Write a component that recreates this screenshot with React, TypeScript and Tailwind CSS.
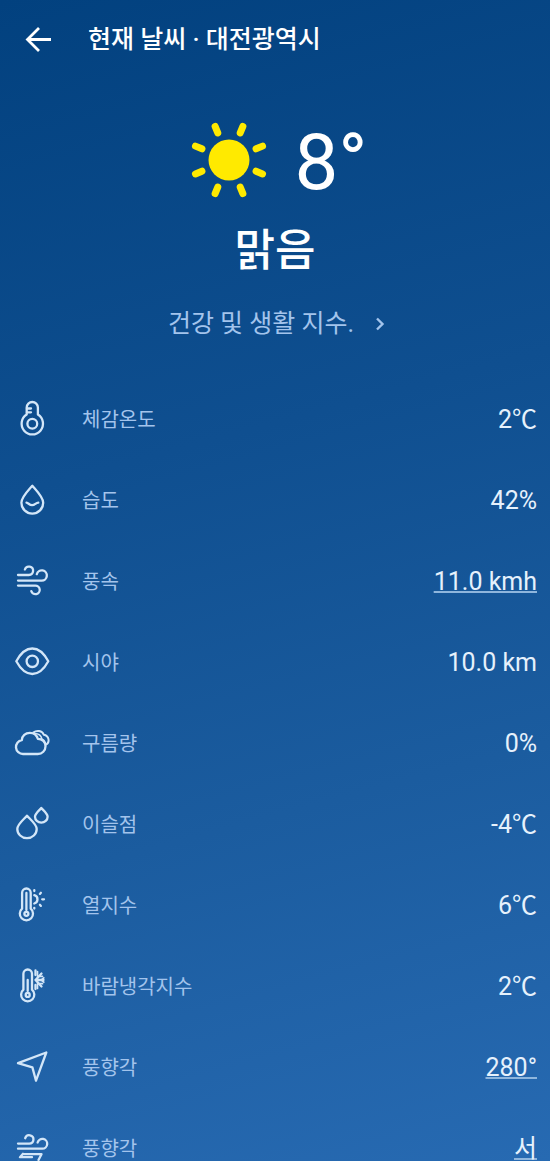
import type { ReactNode } from 'react';

type Metric = {
  id: string;
  label: string;
  value: string;
  icon: ReactNode;
  linked?: boolean;
};

function Icon({ children }: { children: ReactNode }) {
  return (
    <svg
      viewBox="0 0 35 35"
      className="size-[35px] shrink-0 overflow-visible text-[#d3e6f8]"
      fill="none"
      stroke="currentColor"
      strokeWidth="2.3"
      strokeLinecap="round"
      strokeLinejoin="round"
      aria-hidden="true"
    >
      {children}
    </svg>
  );
}

const metrics: Metric[] = [
  {
    id: 'feels-like',
    label: '체감온도',
    value: '2℃',
    icon: (
      <Icon>
        <path d="M11.7 13.6V6.6a5.6 5.6 0 0 1 11.2 0v7A10.7 10.7 0 1 1 11.7 13.6Z" />
        <circle cx="17.3" cy="22.7" r="4.9" />
        <path d="M12 7.5h4M12 11.3h4" />
      </Icon>
    ),
  },
  {
    id: 'humidity',
    label: '습도',
    value: '42%',
    icon: (
      <Icon>
        <path d="M17.3 3.8C14 7.8 6.4 15 6.4 20.7a10.9 10.9 0 0 0 21.8 0C28.2 15 20.6 7.8 17.3 3.8Z" />
        <path d="M11.5 20.6c2 .4 2.8 2.6 5.6 2.6s3.6-2.4 6.2-2.6" />
      </Icon>
    ),
  },
  {
    id: 'wind-speed',
    label: '풍속',
    value: '11.0 kmh',
    linked: true,
    icon: (
      <Icon>
        <path d="M3 12h10.9a4.2 4.2 0 1 0-4-5.5" />
        <path d="M3 17.6h23.6a5.1 5.1 0 1 0-4.8-6.4" />
        <path d="M3 22.6h17.2a4.3 4.3 0 1 1-3.9 5.5" />
      </Icon>
    ),
  },
  {
    id: 'visibility',
    label: '시야',
    value: '10.0 km',
    icon: (
      <Icon>
        <path d="M1.3 17.3C5.5 9.5 11 4.5 17.3 4.5s11.8 5 16 12.8c-4.2 7.7-9.7 12.7-16 12.7S5.5 25 1.3 17.3Z" />
        <circle cx="17.3" cy="17.3" r="5.7" />
      </Icon>
    ),
  },
  {
    id: 'cloud-cover',
    label: '구름량',
    value: '0%',
    icon: (
      <Icon>
        <path d="M8 29a7 7 0 0 1-1.2-13.9C7 10.7 10.5 7.8 14.8 7.8c4 0 7 2.4 8 6 4.5 0 7.7 3.2 7.7 7.5S27.2 29 22.8 29Z" />
        <path d="M18.3 7.6c3.2-2.6 9-2.2 10.5 2.2 5.2.8 6.6 7.4 2 9.9" strokeWidth="2" />
        <path d="M19.5 8.5c4.2.1 6.7 2 7.4 5.5 1.8 1 2.8 2 3.4 3.8" strokeWidth="1.5" />
      </Icon>
    ),
  },
  {
    id: 'dew-point',
    label: '이슬점',
    value: '-4℃',
    icon: (
      <Icon>
        <path d="M12 9.7C9.2 13 2.3 18.3 2.3 22.9a9.7 9.3 0 0 0 19.4 0C21.7 18.3 14.8 13 12 9.7Z" />
        <path d="M26.3 2C24.5 4.3 20 7.5 20 10.7a6.3 6 0 0 0 12.6 0C32.6 7.5 28.1 4.3 26.3 2Z" />
      </Icon>
    ),
  },
  {
    id: 'heat-index',
    label: '열지수',
    value: '6℃',
    icon: (
      <Icon>
        <path d="M7.1 21.7V5.8a4.3 4.3 0 0 1 8.6 0v15.9a6.6 6.6 0 1 1-8.6 0Z" />
        <path d="M11.4 6v17" />
        <circle cx="11.4" cy="26.8" r="2" />
        <path d="M19.3 8.2a4.3 4.3 0 0 1 0 8.3" />
        <path d="M19.3 3.2v.8M25.9 5.8l-1 1.1M27.2 12.3h1.8M24.900 17.800l1 1.100M19.300 20.800v.8" />
      </Icon>
    ),
  },
  {
    id: 'wind-chill',
    label: '바람냉각지수',
    value: '2℃',
    icon: (
      <Icon>
        <path d="M8.4 21.7V5.8a4.300 4.300 0 0 1 8.600 0v15.900a6.600 6.600 0 1 1-8.600 0Z" />
        <path d="M12.7 12v11" />
        <circle cx="12.7" cy="26.9" r="2" />
        <path d="M20.500 2.500v4.500M20.500 17v4M20.500 12h8M20.500 12l6-6.500M20.500 12l6 6.500" />
        <path d="M22.500 3.500v4.800h5M28.800 9.800l-2.500 2.200 2.500 2.200M22.500 20.500v-4.800h5" strokeWidth="1.7" />
      </Icon>
    ),
  },
  {
    id: 'wind-angle',
    label: '풍향각',
    value: '280°',
    linked: true,
    icon: (
      <Icon>
        <path d="M3 14.2 31.3 3.5 21 31.7 17.4 18.4Z" />
      </Icon>
    ),
  },
  {
    id: 'wind-direction',
    label: '풍향각',
    value: '서',
    linked: true,
    icon: (
      <Icon>
        <path d="M3 13.6h11.2a4.2 4.2 0 1 0-4-5.4" />
        <path d="M3 18.7h24.3a4.9 4.9 0 1 0-4.7-6.2" />
        <path d="M8 23.8 5 27.2h12M8 24.2H26.5L23.5 30" />
      </Icon>
    ),
  },
];

// angle of each ray of the sun, in degrees
const rays = [22.5, 67.5, 112.5, 157.5, 202.5, 247.5, 292.5, 337.5];

function Sun() {
  return (
    <svg viewBox="0 0 76 76" className="size-[76px]" aria-hidden="true">
      <circle cx="38" cy="38" r="20.5" fill="#ffea00" />
      {rays.map(angle => (
        <path
          key={angle}
          d="M67.3 38h7"
          transform={`rotate(${angle} 38 38)`}
          stroke="#ffea00"
          strokeWidth="7"
          strokeLinecap="round"
        />
      ))}
    </svg>
  );
}

export default function App() {
  return (
    <div className="flex h-screen flex-col bg-[linear-gradient(165deg,#02417f_0%,#0f4f90_38%,#1b5c9f_68%,#276ab2_100%)] font-[Roboto,'Noto_Sans_CJK_KR',sans-serif] text-white">
      {/* Header */}
      <header className="flex h-20 shrink-0 items-center gap-9 px-6">
        <button type="button" aria-label="뒤로" className="cursor-pointer">
          <svg
            viewBox="0 0 28 28"
            className="size-7"
            fill="none"
            stroke="currentColor"
            strokeWidth="2.8"
            aria-hidden="true"
          >
            <path d="M27 13.5H4M15 2 3.5 13.5 15 25" />
          </svg>
        </button>
        <h1 className="text-[25px] leading-9 font-medium">현재 날씨 · 대전광역시</h1>
      </header>

      {/* Current conditions */}
      <section className="flex shrink-0 flex-col items-center pt-10 pb-9">
        <div className="flex h-20 items-center gap-7 pl-2">
          <Sun />
          <p className="pt-1.5 text-[78px] leading-20">8°</p>
        </div>
        <p className="mt-4 text-[44px] leading-[70px] font-medium">맑음</p>
        <a href="#life-index" className="mt-5 flex items-center gap-5 pl-1 text-[25px] leading-9 text-[#a3c4ec]">
          건강 및 생활 지수.
          <svg
            viewBox="0 0 12 16"
            className="h-4 w-3"
            fill="none"
            stroke="currentColor"
            strokeWidth="2.4"
            aria-hidden="true"
          >
            <path d="M3 2.5 8.5 8 3 13.5" />
          </svg>
        </a>
      </section>

      {/* Details */}
      <dl className="min-h-0 flex-1 overflow-y-auto [scrollbar-width:none]">
        {metrics.map(metric => (
          <div key={metric.id} className="flex h-[81px] items-center pr-[13px] pl-[15px]">
            {metric.icon}
            <dt className="ml-8 flex-1 pt-0.5 text-[20px] leading-8 text-[#a3c4ec]">{metric.label}</dt>
            <dd className="pt-0.5 text-[25px] leading-8 text-[#e6f1fc]">
              {metric.linked ? (
                <a
                  href={`#${metric.id}`}
                  className="underline decoration-[#8fb6dd] decoration-2 underline-offset-1"
                >
                  {metric.value}
                </a>
              ) : (
                metric.value
              )}
            </dd>
          </div>
        ))}
      </dl>
    </div>
  );
}
